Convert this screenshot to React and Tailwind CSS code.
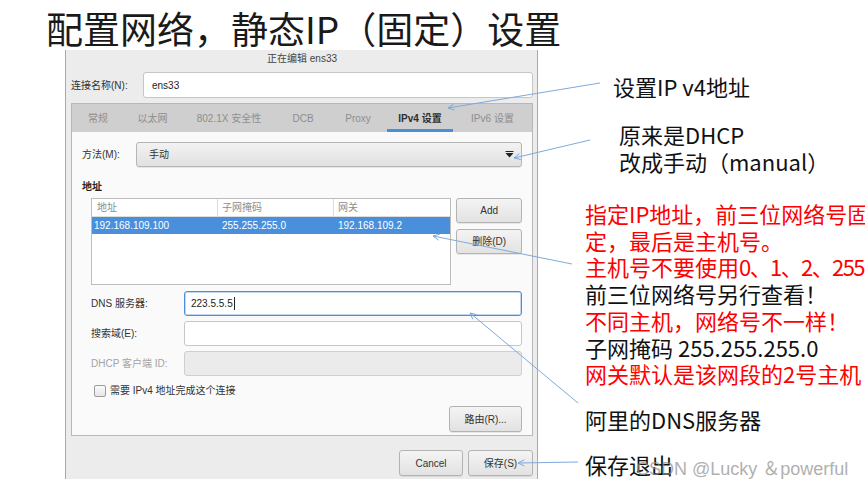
import React from "react";

function Arrow({ x1, y1, x2, y2 }) {
  const a = Math.atan2(y2 - y1, x2 - x1);
  const L = 7;
  const s = 0.45;
  const p1 = [x2 - L * Math.cos(a - s), y2 - L * Math.sin(a - s)];
  const p2 = [x2 - L * Math.cos(a + s), y2 - L * Math.sin(a + s)];
  return (
    <g stroke="#7fa9dc" strokeWidth="1" fill="none">
      <line x1={x1} y1={y1} x2={x2} y2={y2} />
      <polyline points={`${p1[0]},${p1[1]} ${x2},${y2} ${p2[0]},${p2[1]}`} />
    </g>
  );
}

function Btn({ children, className }) {
  return (
    <div
      className={
        "flex items-center justify-center rounded-[3px] border border-[#b3b3b3] bg-gradient-to-b from-[#f4f4f4] to-[#e2e2e2] text-[#333] shadow-[0_1px_0_rgba(0,0,0,0.08)] " +
        (className || "")
      }
    >
      {children}
    </div>
  );
}

function Dialog() {
  const tabs = [
    ["常规", "w-[52px]"],
    ["以太网", "w-[57px]"],
    ["802.1X 安全性", "w-[96px]"],
    ["DCB", "w-[52px]"],
    ["Proxy", "w-[58px]"],
  ];
  return (
    <div className="ml-[65px] flex h-[429px] w-[473px] flex-col border-x border-[#a9a9a9] bg-[#ececec] pl-[5px] pr-[4px] font-['Liberation_Sans','Noto_Sans_CJK_SC',sans-serif] text-[10px] text-[#333]">
      <div className="h-[18px] text-center leading-[18px] text-[#444]">正在编辑 ens33</div>
      <div className="mt-[4px] flex items-center">
        <div className="w-[72px]">连接名称(N):</div>
        <div className="flex h-[26px] flex-1 items-center rounded-[3px] border border-[#c6c6c6] bg-white pl-[8px] text-[#222]">
          ens33
        </div>
      </div>
      <div className="mt-[5px] flex h-[333px] flex-col border border-[#b8b8b8]">
        <div className="flex h-[28px] bg-[#cfcfcf] text-[#8e8e8e]">
          {tabs.map(([t, w]) => (
            <div key={t} className={"flex items-center justify-center " + w}>
              {t}
            </div>
          ))}
          <div className="relative flex w-[66px] items-center justify-center font-bold text-[#2e2e2e]">
            IPv4 设置
            <div className="absolute bottom-0 left-0 right-0 h-[3px] bg-[#4a90d9]" />
          </div>
          <div className="flex flex-1 items-center justify-center">IPv6 设置</div>
        </div>
        <div className="flex flex-1 flex-col bg-[#fafafa] px-[10px] pt-[10px]">
          <div className="flex items-center">
            <div className="w-[54px]">方法(M):</div>
            <div className="flex h-[25px] flex-1 items-center justify-between rounded-[3px] border border-[#b5b5b5] bg-gradient-to-b from-[#f2f2f2] to-[#e1e1e1] pl-[12px] pr-[7px] shadow-[0_1px_0_rgba(0,0,0,0.08)]">
              <span>手动</span>
              <svg width="9" height="7" viewBox="0 0 9 7">
                <rect x="0.5" y="0" width="8" height="1" fill="#222" />
                <polygon points="0.5,2 8.5,2 4.5,6.5" fill="#222" />
              </svg>
            </div>
          </div>
          <div className="mt-[13px] h-[14px] font-bold leading-[14px] text-[#222]">地址</div>
          <div className="ml-[9px] mt-[4px] flex gap-[5px]">
            <div className="h-[87px] w-[362px] border border-[#bdbdbd] bg-white">
              <div className="flex h-[18px] border-b border-[#dedede] text-[#8c8c8c]">
                <div className="flex w-[126px] items-center border-r border-[#dedede] pl-[5px]">地址</div>
                <div className="flex w-[116px] items-center border-r border-[#dedede] pl-[4px]">子网掩码</div>
                <div className="flex flex-1 items-center pl-[4px]">网关</div>
              </div>
              <div className="flex h-[17px] bg-[#4a8fdb] text-white">
                <div className="flex w-[126px] items-center pl-[2px]">192.168.109.100</div>
                <div className="flex w-[116px] items-center pl-[4px]">255.255.255.0</div>
                <div className="flex flex-1 items-center pl-[4px]">192.168.109.2</div>
              </div>
            </div>
            <div className="flex w-[66px] flex-col gap-[6px]">
              <Btn className="h-[25px]">Add</Btn>
              <Btn className="h-[25px]">删除(D)</Btn>
            </div>
          </div>
          <div className="ml-[9px] mt-[6px] flex flex-col gap-[5px]">
            <div className="flex items-center">
              <div className="w-[93px]">DNS 服务器:</div>
              <div className="flex h-[25px] flex-1 items-center rounded-[3px] border border-[#4a90d9] bg-white pl-[6px] text-[#222] shadow-[inset_0_0_0_1px_rgba(74,144,217,0.35)]">
                223.5.5.5
                <span className="ml-[1px] h-[13px] w-[1px] bg-[#222]" />
              </div>
            </div>
            <div className="flex items-center">
              <div className="w-[93px]">搜索域(E):</div>
              <div className="h-[25px] flex-1 rounded-[3px] border border-[#c6c6c6] bg-white" />
            </div>
            <div className="flex items-center">
              <div className="w-[93px] text-[#a3a3a3]">DHCP 客户端 ID:</div>
              <div className="h-[25px] flex-1 rounded-[3px] border border-[#cfcfcf] bg-[#ebebeb]" />
            </div>
          </div>
          <div className="ml-[12px] mt-[7px] flex items-center gap-[4px]">
            <div className="h-[12px] w-[12px] rounded-[2px] border border-[#9c9c9c] bg-gradient-to-b from-[#fafafa] to-[#e6e6e6]" />
            <span className="text-[#333]">需要 IPv4 地址完成这个连接</span>
          </div>
          <div className="mt-[8px] flex justify-end">
            <Btn className="h-[26px] w-[73px]">路由(R)...</Btn>
          </div>
        </div>
      </div>
      <div className="mt-[14px] flex justify-end gap-[5px]">
        <Btn className="h-[26px] w-[64px]">Cancel</Btn>
        <Btn className="h-[26px] w-[65px]">保存(S)</Btn>
      </div>
    </div>
  );
}

function Annotations() {
  return (
    <div className="flex w-[327px] flex-col whitespace-nowrap text-[22px] leading-[27px] text-[#111]">
      <div className="ml-[75px] mt-[23px]">设置IP v4地址</div>
      <div className="ml-[81px] mt-[21px]">
        <div>原来是DHCP</div>
        <div>改成手动（manual）</div>
      </div>
      <div className="ml-[47px] mt-[25px] leading-[26.7px]">
        <div className="text-[#ff0000]">指定IP地址，前三位网络号固</div>
        <div className="text-[#ff0000]">定，最后是主机号。</div>
        <div className="text-[#ff0000]">
          主机号不要使用<span className="tracking-[-1.6px]">0、1、2、255</span>
        </div>
        <div>前三位网络号另行查看！</div>
        <div className="text-[#ff0000]">不同主机，网络号不一样！</div>
        <div>子网掩码 255.255.255.0</div>
        <div className="text-[#ff0000]">网关默认是该网段的2号主机</div>
      </div>
      <div className="ml-[47px] mt-[19px]">阿里的DNS服务器</div>
      <div className="ml-[47px] mt-[18px]">保存退出</div>
    </div>
  );
}

export default function App() {
  return (
    <div className="relative h-[488px] w-[865px] overflow-hidden bg-white font-['Noto_Sans_CJK_SC',sans-serif]">
      <div className="h-[50px] whitespace-nowrap pl-[46px] pt-[8px] text-[37px] leading-[40px] text-[#1a1a1a]">
        配置网络，静态IP（固定）设置
      </div>
      <div className="flex">
        <Dialog />
        <Annotations />
      </div>
      <svg className="pointer-events-none absolute left-0 top-0" width="865" height="488">
        <Arrow x1={600} y1={83} x2={448} y2={108} />
        <Arrow x1={590} y1={140} x2={514} y2={158} />
        <Arrow x1={572} y1={264} x2={433} y2={236} />
        <Arrow x1={578} y1={403} x2={470} y2={313} />
        <Arrow x1={578} y1={462} x2={518} y2={463} />
      </svg>
      <div className="pointer-events-none absolute left-[636px] top-[456px] whitespace-nowrap font-['Liberation_Sans','Noto_Sans_CJK_SC',sans-serif] text-[18px] text-[#8f8f8f] opacity-70">
        CSDN @Lucky ＆powerful
      </div>
    </div>
  );
}
